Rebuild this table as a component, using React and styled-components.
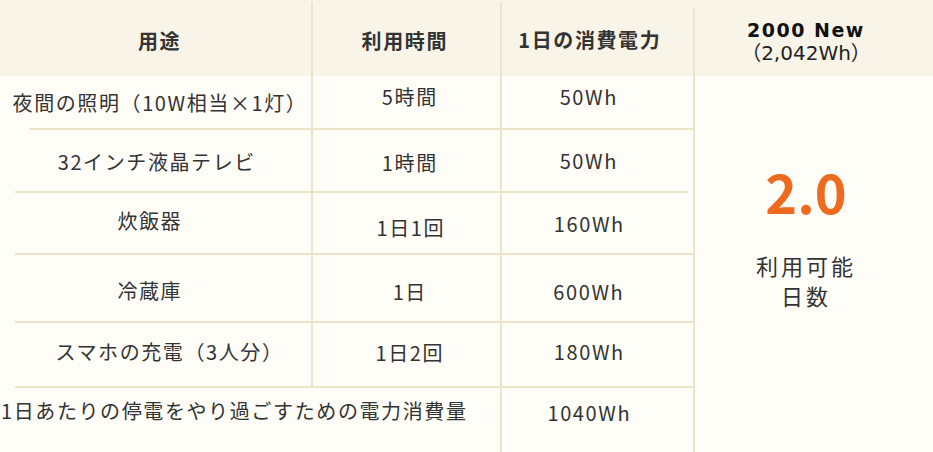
import React from "react";
import styled, { createGlobalStyle, css } from "styled-components";

const LINE = "#ede3c8";
const HEAD_BG = "#f9f4e8";
const BODY_BG = "#fffdf7";
const INK = "#333";

const GlobalStyle = createGlobalStyle`
  *, *::before, *::after { box-sizing: border-box; }
  html, body { margin: 0; padding: 0; background: ${BODY_BG}; }
  body {
    font-family: "Noto Sans CJK JP", "Noto Sans", sans-serif;
    color: ${INK};
    overflow: hidden;
  }
`;

const nudge = ({ $dx = 0, $dy = 0 }) => css`
  padding-left: ${$dx > 0 ? $dx * 2 : 0}px;
  padding-right: ${$dx < 0 ? -$dx * 2 : 0}px;
  padding-top: ${$dy > 0 ? $dy * 2 : 0}px;
  padding-bottom: ${$dy < 0 ? -$dy * 2 : 0}px;
`;

const Table = styled.div`
  display: grid;
  grid-template-columns: 313px 189px 193px 1fr;
  grid-template-rows: 76px 54px 63px 62px 68px 65px 64px;
  width: 933px;
  height: 452px;
`;

const Head = styled.div`
  display: flex;
  flex-direction: column;
  align-items: center;
  justify-content: center;
  font-size: 20px;
  font-weight: 700;
  line-height: 1.2;
  letter-spacing: 0.08em;
  white-space: nowrap;
  background: ${(p) =>
      p.$vr != null
        ? `linear-gradient(${LINE}, ${LINE}) right 0 top ${p.$vr}px / 2px 100% no-repeat,`
        : ""}
    ${HEAD_BG};
  ${nudge}
`;

const Model = styled.div`
  font-family: "DejaVu Sans", sans-serif;
  font-weight: 700;
  font-size: 19px;
  line-height: 23px;
  letter-spacing: 1.5px;
  color: #111;
`;

const Capacity = styled.div`
  font-family: "DejaVu Sans", "Noto Sans CJK JP", sans-serif;
  font-weight: 400;
  font-size: 20px;
  line-height: 23px;
  letter-spacing: 0;
  color: #222;
`;

const Cell = styled.div`
  display: flex;
  align-items: center;
  justify-content: ${(p) => (p.$start ? "flex-start" : "center")};
  grid-column: ${(p) => (p.$span ? `span ${p.$span}` : "auto")};
  font-size: 20px;
  line-height: 1.2;
  letter-spacing: 0.08em;
  white-space: nowrap;
  border-right: ${(p) => (p.$vr ? `2px solid ${LINE}` : "none")};
  ${(p) =>
    p.$rule &&
    css`
      background: linear-gradient(${LINE}, ${LINE}) ${p.$ruleL || 0}px 100% /
        calc(100% - ${(p.$ruleL || 0) + (p.$ruleR || 0)}px) 2px no-repeat;
    `}
  ${nudge}
  ${(p) => p.$start && css`padding-left: ${p.$indent}px;`}
`;

const Summary = styled.div`
  grid-column: 4;
  grid-row: 2 / span 6;
  display: flex;
  flex-direction: column;
  align-items: center;
  padding: 88px 16px 0 0;
`;

const Days = styled.div`
  font-size: 54px;
  font-weight: 700;
  line-height: 1;
  color: #ee6a1e;
`;

const DaysLabel = styled.div`
  margin-top: 32px;
  display: flex;
  flex-direction: column;
  align-items: center;
  font-size: 22px;
  letter-spacing: 3px;
  color: ${INK};
`;

const LabelLine = styled.div`
  height: 30px;
  line-height: 30px;
`;

const rows = [
  { use: "夜間の照明（10W相当×1灯）", time: "5時間", power: "50Wh", ruleL: 29, u: [4.5, 0], t: [3.3, -6.5], p: [-8.7, -6] },
  { use: "32インチ液晶テレビ", time: "1時間", power: "50Wh", ruleL: 15, ruleR: 5, u: [1.3, 0.4], t: [3.3, 1.4], p: [-8.7, -1] },
  { use: "炊飯器", time: "1日1回", power: "160Wh", ruleL: 15, u: [-5.7, -3], t: [4.3, 4.4], p: [-8.2, 0] },
  { use: "冷蔵庫", time: "1日", power: "600Wh", ruleL: 15, u: [-5.7, 2], t: [3.3, 3], p: [-8.7, 2.6] },
  { use: "スマホの充電（3人分）", time: "1日2回", power: "180Wh", ruleL: 15, u: [14, -3.6], t: [3.3, -2.6], p: [-8.2, -3.9] },
];

export default function App() {
  return (
    <>
      <GlobalStyle />
      <Table>
        <Head $vr={2} $dx={3} $dy={3}>用途</Head>
        <Head $vr={2} $dx={-2.7} $dy={3}>利用時間</Head>
        <Head $vr={7} $dx={-8.7} $dy={2}>1日の消費電力</Head>
        <Head $dx={-8} $dy={3.5}>
          <Model>2000 New</Model>
          <Capacity>（2,042Wh）</Capacity>
        </Head>

        {rows.map((r) => (
          <React.Fragment key={r.use}>
            <Cell $vr $rule $ruleL={r.ruleL} $dx={r.u[0]} $dy={r.u[1]}>
              {r.use}
            </Cell>
            <Cell $vr $rule $dx={r.t[0]} $dy={r.t[1]}>
              {r.time}
            </Cell>
            <Cell $vr $rule $ruleR={r.ruleR} $dx={r.p[0]} $dy={r.p[1]}>
              {r.power}
            </Cell>
          </React.Fragment>
        ))}

        <Cell $vr $span={2} $start $indent={1} $dy={-9}>
          1日あたりの停電をやり過ごすための電力消費量
        </Cell>
        <Cell $vr $dx={-8.2} $dy={-7.4}>
          1040Wh
        </Cell>

        <Summary>
          <Days>2.0</Days>
          <DaysLabel>
            <LabelLine>利用可能</LabelLine>
            <LabelLine>日数</LabelLine>
          </DaysLabel>
        </Summary>
      </Table>
    </>
  );
}
